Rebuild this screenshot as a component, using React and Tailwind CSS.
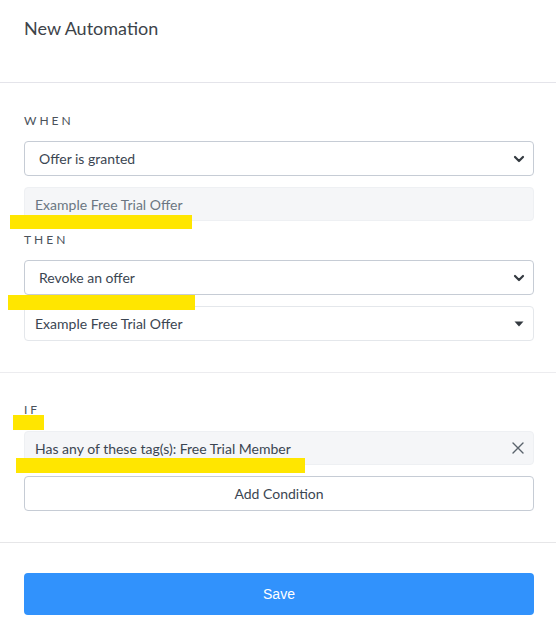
import React from "react";

function Chevron() {
  return (
    <svg width="12" height="12" viewBox="0 0 12 12" className="text-[#343a40]">
      <path d="M2 4l4 4 4-4" fill="none" stroke="currentColor" strokeWidth="2.2" strokeLinecap="round" strokeLinejoin="round" />
    </svg>
  );
}

function Caret() {
  return (
    <svg width="10" height="6" viewBox="0 0 10 6" className="text-[#343a40]">
      <path d="M0.5 0.5h9L5 5.5z" fill="currentColor" />
    </svg>
  );
}

function SelectBox({ children, light }) {
  return (
    <div
      className={
        "h-[35px] rounded-[4px] border bg-white flex items-center justify-between pl-[14px] pr-[6px] text-[14px] text-[#3b4652] " +
        (light ? "border-[#e4e7eb]" : "border-[#c6ccd5]")
      }
    >
      <span className={light ? "-ml-[4px]" : ""}>{children}</span>
      <span className="w-[16px] flex justify-center">{light ? <Caret /> : <Chevron />}</span>
    </div>
  );
}

function Label({ children }) {
  return (
    <div className="text-[12px] leading-4 tracking-[0.25em] text-[#4a525b] mb-3">{children}</div>
  );
}

export default function App() {
  return (
    <div
      className="relative w-[556px] min-h-[625px] bg-white text-[#3b4652]"
      style={{ fontFamily: "Lato, 'Open Sans', sans-serif" }}
    >
      {/* Header */}
      <div className="h-[83px] pl-6 pr-[22px] pt-[18px] border-b border-[#e4e4ea]">
        <h1 className="text-[18px] leading-5 text-[#3d4349]">New Automation</h1>
      </div>

      {/* When / Then */}
      <div className="pl-6 pr-[22px] pt-[30px] pb-[31px] border-b border-[#ececef]">
        <Label>WHEN</Label>
        <SelectBox>Offer is granted</SelectBox>
        <div className="mt-[11px] h-[34px] rounded-[4px] border border-[#eef0f3] bg-[#f5f6f8] flex items-center px-[10px] text-[14px] text-[#6b7682]">
          Example Free Trial Offer
        </div>

        <div className="mt-[11px]">
          <Label>THEN</Label>
        </div>
        <SelectBox>Revoke an offer</SelectBox>
        <div className="mt-[11px]">
          <SelectBox light>Example Free Trial Offer</SelectBox>
        </div>
      </div>

      {/* If */}
      <div className="pl-6 pr-[22px] pt-[29px] pb-[31px] border-b border-[#e6e6e8]">
        <div className="text-[12px] leading-4 tracking-[0.25em] text-[#4a525b] mb-[13px]">IF</div>
        <div className="h-[34px] rounded-[4px] border border-[#eef0f3] bg-[#f5f6f8] flex items-center justify-between pl-[10px] pr-[8px] text-[14px] text-[#3b4652]">
          <span>Has any of these tag(s): Free Trial Member</span>
          <svg width="14" height="14" viewBox="0 0 14 14" className="text-[#5a636c]">
            <path d="M2 2l10 10M12 2L2 12" stroke="currentColor" strokeWidth="1.4" strokeLinecap="round" />
          </svg>
        </div>
        <button className="mt-[11px] w-full h-[35px] rounded-[4px] border border-[#c6ccd5] bg-white text-[14px] text-[#3b4652]">
          Add Condition
        </button>
      </div>

      {/* Footer */}
      <div className="pl-6 pr-[22px] pt-[30px] pb-[11px]">
        <button
          className="w-full h-[42px] rounded-[4px] bg-[#3192fc] text-white text-[14px]"
          style={{ fontFamily: "'Liberation Sans', Arial, sans-serif" }}
        >
          Save
        </button>
      </div>

      {/* Redaction highlights */}
      <div className="absolute left-[10px] top-[215px] w-[182px] h-[14px] bg-[#ffe600]" />
      <div className="absolute left-[8px] top-[295px] w-[187px] h-[15px] bg-[#ffe600]" />
      <div className="absolute left-[13px] top-[415px] w-[31px] h-[15px] bg-[#ffe600]" />
      <div className="absolute left-[16px] top-[458px] w-[289px] h-[15px] bg-[#ffe600]" />
    </div>
  );
}
